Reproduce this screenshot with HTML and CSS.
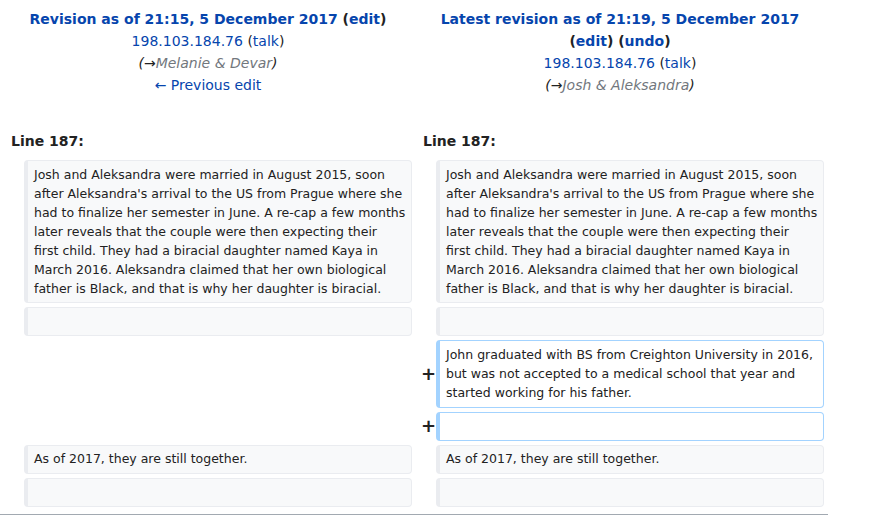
FILE: index.html
```html
<!DOCTYPE html>
<html>
<head>
<meta charset="utf-8">
<link rel="stylesheet" href="styles.css">
</head>
<body>
<div class="page">
<table class="diff">
  <colgroup>
    <col class="col-marker"><col class="col-content"><col class="col-marker"><col class="col-content">
  </colgroup>
  <tr class="title-row">
    <td colspan="2" class="title">
      <div class="title-main"><a href="#">Revision as of 21:15, 5 December 2017</a> <span class="paren">(<a href="#">edit</a>)</span></div>
      <div><a href="#">198.103.184.76</a> <span class="plain">(<a href="#">talk</a>)</span></div>
      <div class="summary"><span class="plain">(</span><span class="arrow">→</span><span class="comment">Melanie &amp; Devar</span><span class="plain">)</span></div>
      <div><a href="#">← Previous edit</a></div>
    </td>
    <td colspan="2" class="title">
      <div class="title-main"><a href="#">Latest revision as of 21:19, 5 December 2017</a></div>
      <div class="title-main"><span class="paren">(<a href="#">edit</a>)</span> <span class="paren">(<a href="#">undo</a>)</span></div>
      <div><a href="#">198.103.184.76</a> <span class="plain">(<a href="#">talk</a>)</span></div>
      <div class="summary"><span class="plain">(</span><span class="arrow">→</span><span class="comment">Josh &amp; Aleksandra</span><span class="plain">)</span></div>
    </td>
  </tr>
  <tr>
    <td colspan="2" class="lineno">Line 187:</td>
    <td colspan="2" class="lineno">Line 187:</td>
  </tr>
  <tr>
    <td class="marker"></td>
    <td class="context">Josh and Aleksandra were married in August 2015, soon<br>after Aleksandra's arrival to the US from Prague where she<br>had to finalize her semester in June. A re-cap a few months<br>later reveals that the couple were then expecting their<br>first child. They had a biracial daughter named Kaya in<br>March 2016. Aleksandra claimed that her own biological<br>father is Black, and that is why her daughter is biracial.</td>
    <td class="marker"></td>
    <td class="context">Josh and Aleksandra were married in August 2015, soon<br>after Aleksandra's arrival to the US from Prague where she<br>had to finalize her semester in June. A re-cap a few months<br>later reveals that the couple were then expecting their<br>first child. They had a biracial daughter named Kaya in<br>March 2016. Aleksandra claimed that her own biological<br>father is Black, and that is why her daughter is biracial.</td>
  </tr>
  <tr>
    <td class="marker"></td>
    <td class="context"><br></td>
    <td class="marker"></td>
    <td class="context"><br></td>
  </tr>
  <tr>
    <td colspan="2" class="empty"></td>
    <td class="marker">+</td>
    <td class="added">John graduated with BS from Creighton University in 2016,<br>but was not accepted to a medical school that year and<br>started working for his father.</td>
  </tr>
  <tr>
    <td colspan="2" class="empty"></td>
    <td class="marker">+</td>
    <td class="added"><br></td>
  </tr>
  <tr>
    <td class="marker"></td>
    <td class="context">As of 2017, they are still together.</td>
    <td class="marker"></td>
    <td class="context">As of 2017, they are still together.</td>
  </tr>
  <tr>
    <td class="marker"></td>
    <td class="context"><br></td>
    <td class="marker"></td>
    <td class="context"><br></td>
  </tr>
</table>
<div class="rule"></div>
</div>
</body>
</html>
```
FILE: styles.css
```css
html, body {
  margin: 0;
  padding: 0;
  background: #fff;
}
body {
  font-family: "DejaVu Sans", sans-serif;
  color: #222;
  font-size: 14px;
}
.page {
  width: 828px;
}
a {
  color: #0645ad;
  text-decoration: none;
}
table.diff {
  width: 828px;
  border-spacing: 4px;
  table-layout: fixed;
  border-collapse: separate;
}
.col-marker { width: 16px; }
.col-content { width: 388px; }
.diff td {
  padding: 0;
}
td.title {
  text-align: center;
  vertical-align: top;
  font-size: 14px;
  line-height: 22px;
  padding: 4px 0 27px 0;
}
.title-main {
  font-weight: bold;
}
.paren, .plain {
  color: #222;
}
.summary {
  font-style: italic;
}
.summary .arrow {
  color: #222;
  font-style: normal;
}
.summary .comment {
  color: #72777d;
}
td.lineno {
  font-weight: bold;
  font-size: 14px;
  line-height: 20px;
  padding: 4px 7px 5px 7px;
}
td.marker {
  font-weight: bold;
  font-size: 18px;
  line-height: 20px;
  padding: 0 0 0 5px;
  vertical-align: middle;
  color: #222;
}
td.context, td.added {
  font-size: 12.5px;
  line-height: 19px;
  padding: 3.7px 4px 4.5px 6px;
  vertical-align: top;
  border-style: solid;
  border-width: 1px 1px 1px 4px;
  border-radius: 4px;
  white-space: nowrap;
}
td.context {
  background: #f8f9fa;
  border-color: #eaecf0;
  color: #222;
}
td.added {
  background: #fff;
  border-color: #a3d3ff;
}
.rule {
  border-top: 1px solid #a2a9b1;
  margin-top: 3px;
}
```
